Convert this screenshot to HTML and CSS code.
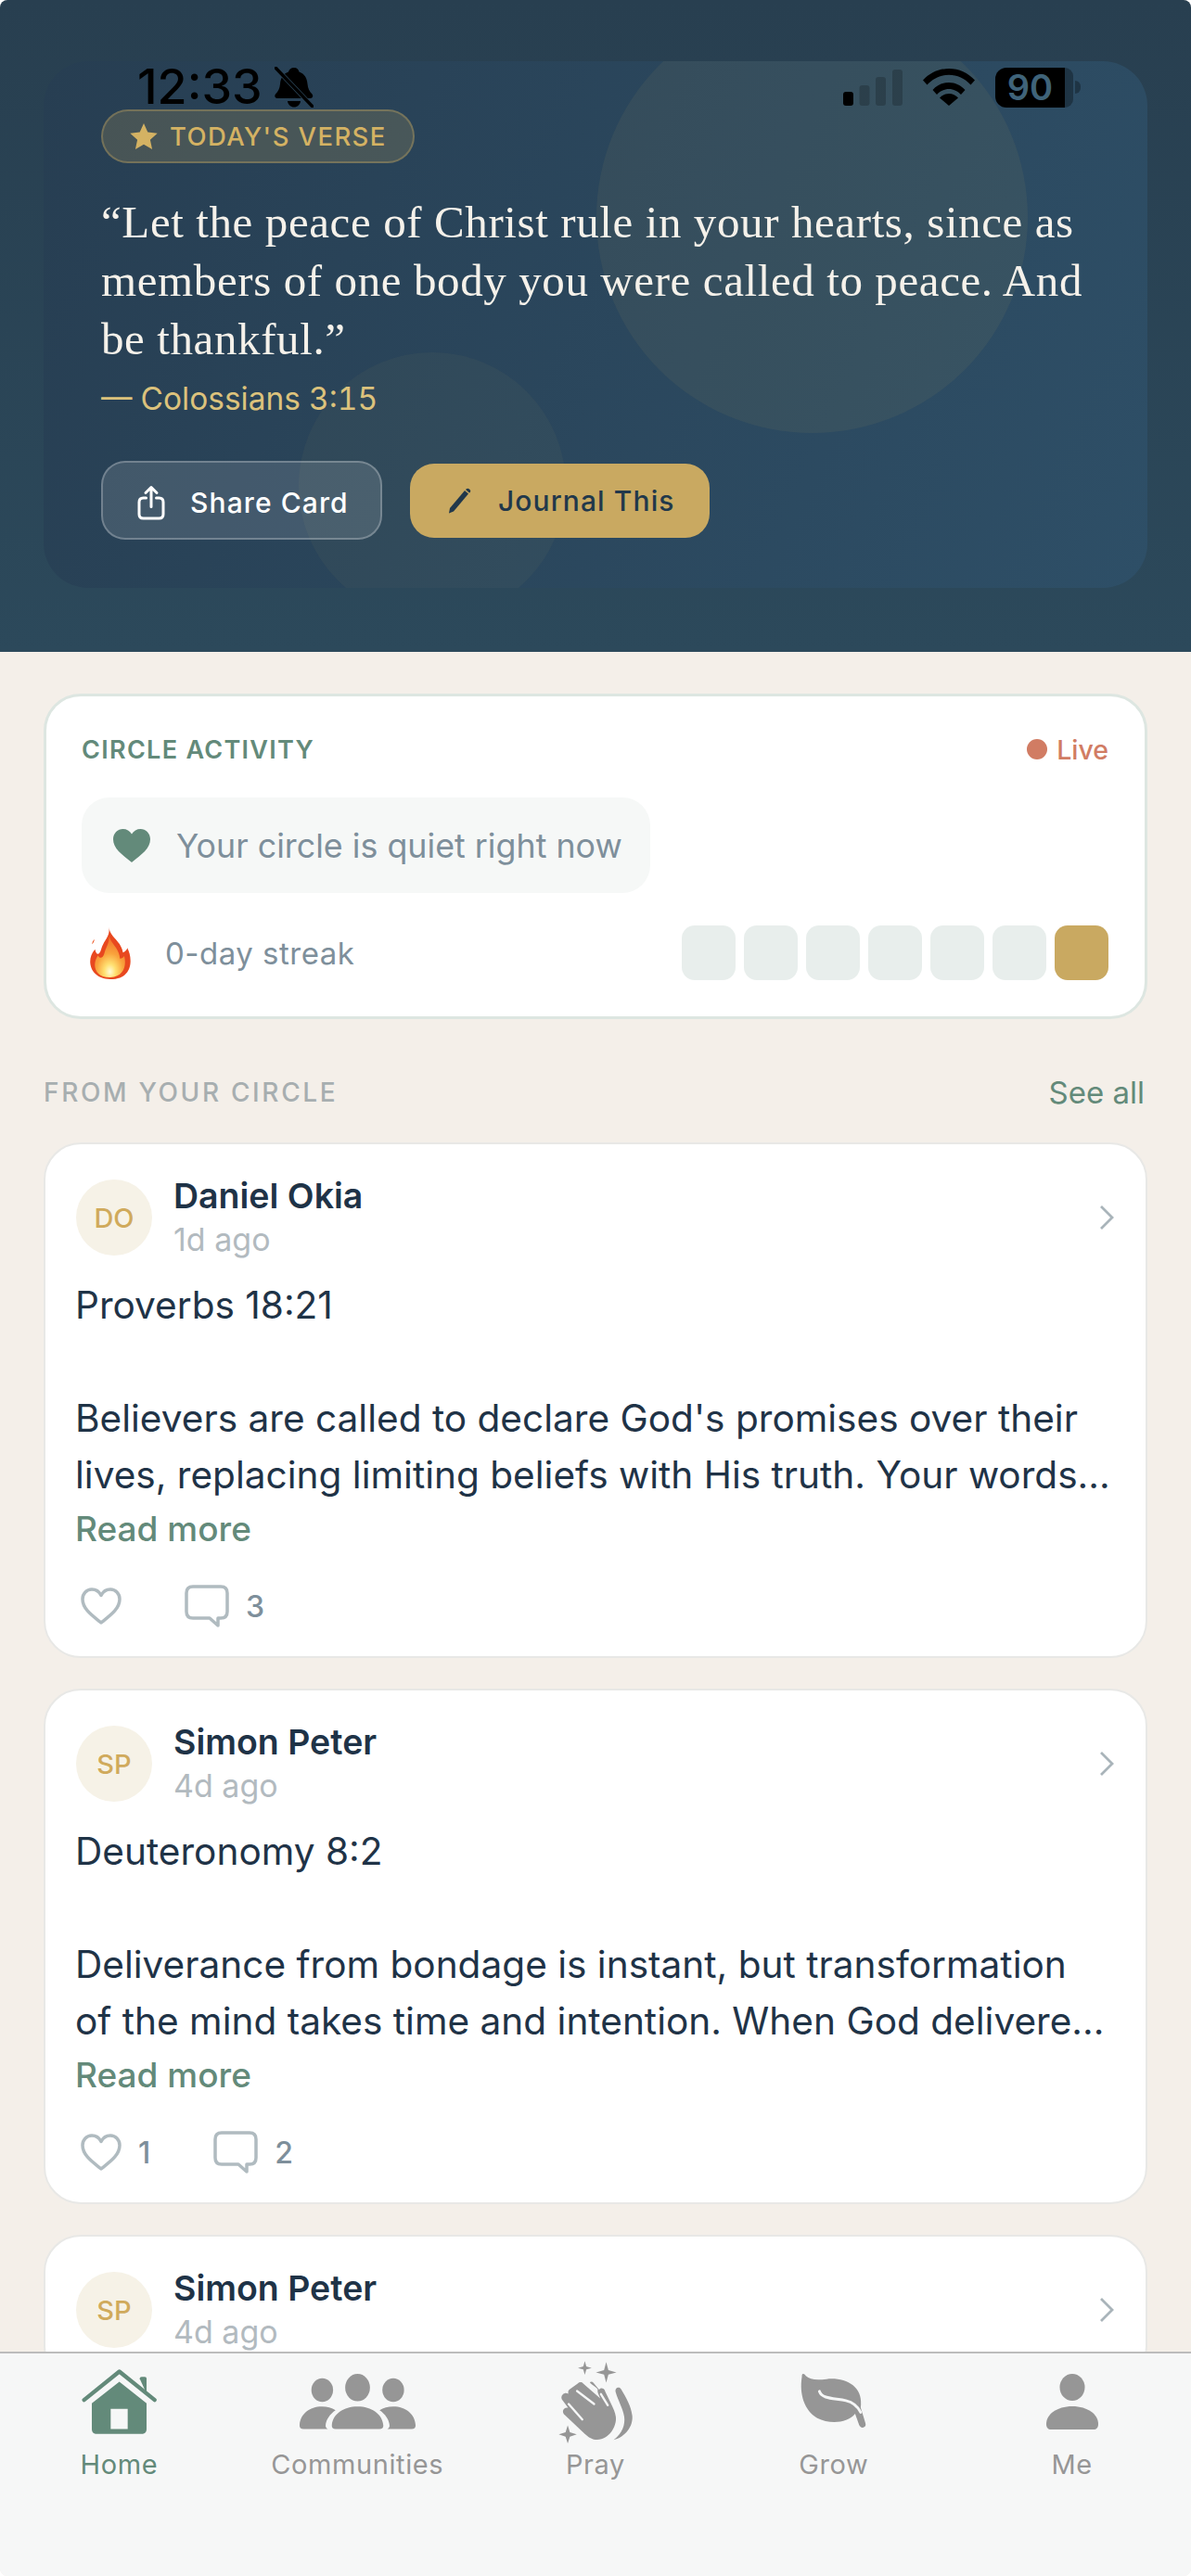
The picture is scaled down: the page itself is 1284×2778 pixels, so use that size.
FILE: index.html
```html
<!DOCTYPE html>
<html lang="en">
<head>
  <meta charset="UTF-8" />
  <meta name="viewport" content="width=device-width, initial-scale=1" />
  <title>Home</title>
  <link rel="stylesheet" href="styles.css">
</head>
<body>
<div class="screen">

  <!-- Status bar sits over the hero -->
  <div class="status-bar">
    <div class="status-left">
      <span class="status-time">12:33</span>
      <svg class="bell" viewBox="0 0 42 44" width="42" height="44">
        <path d="M21 1c3 0 5 2 5.500 4.500 6 2 8.500 7 9 13 .5 5 2 8 5 11 1.500 2 .5 4.500-2 4.500H3c-2.500 0-3.500-2.500-2-4.500 3-3 4.500-6 5-11 .5-6 3-11 9-13C15.500 3 18 1 21 1z"/>
        <path d="M14 37h14c-.5 4-3.500 6.500-7 6.500s-6.500-2.500-7-6.500z"/>
        <path class="bell-cut" d="M3 3l36 38"/>
        <path class="bell-slash" d="M1 1l40 42"/>
      </svg>
    </div>
    <div class="status-right">
      <svg viewBox="0 0 64 40" width="64" height="40">
        <rect x="0" y="25" width="11" height="15" rx="3"/>
        <rect class="bar-off" x="17.500" y="18" width="11" height="22" rx="3"/>
        <rect class="bar-off" x="35" y="9" width="11" height="31" rx="3"/>
        <rect class="bar-off" x="53" y="1" width="11" height="39" rx="3"/>
      </svg>
      <svg class="wifi" viewBox="0 0 56 40" width="56" height="40">
        <path d="M0 12.500C7.500 4.500 17 0 28 0s20.500 4.500 28 12.500l-4.500 5C45 10.500 37 6.800 28 6.800S11 10.500 4.500 17.500z"/>
        <path d="M10.500 23C15 18 21 15 28 15s13 3 17.500 8L41 28c-3.300-3.500-8-6-13-6s-9.700 2.500-13 6z"/>
        <path d="M18 31.500c2.500-2.700 6-4.500 10-4.500s7.500 1.800 10 4.500L28 40z"/>
      </svg>
      <div class="battery">
        <span class="battery-level">90</span>
        <span class="battery-rest"></span>
        <span class="battery-nub"></span>
      </div>
    </div>
  </div>

  <section class="hero">
    <div class="verse-card">
      <div class="blob blob-big"></div>
      <div class="blob blob-small"></div>
      <div class="verse-badge">
        <svg viewBox="0 0 30 29" width="30" height="29"><path d="M15 0l4.300 9.600 10.400 1.100-7.800 7 2.200 10.300L15 22.700 5.900 28l2.200-10.300-7.800-7 10.400-1.100z"/></svg>
        <span>TODAY'S VERSE</span>
      </div>
      <p class="verse-text">“Let the peace of Christ rule in your hearts, since as members of one body you were called to peace. And be thankful.”</p>
      <p class="verse-ref">— Colossians 3:15</p>
      <div class="verse-actions">
        <button class="btn btn-share">
          <svg viewBox="0 0 30 38" width="30" height="38" fill="none" stroke="#fff" stroke-width="3" stroke-linecap="round" stroke-linejoin="round">
            <path d="M15 2.500v21M9 8.500l6-6 6 6"/>
            <path d="M9.500 14H6.500C3.500 14 2 15.500 2 18.500v13C2 34.500 3.500 36 6.500 36h17c3 0 4.500-1.500 4.500-4.500v-13c0-3-1.500-4.500-4.500-4.500h-3"/>
          </svg>
          <span>Share Card</span>
        </button>
        <button class="btn btn-journal">
          <svg viewBox="0 0 30 30" width="30" height="30"><path d="M3 28.500l1-5.500L20 4l4 3.500L8 26.500z" fill="#21384b"/><path d="M21.500 2.500c1-1 2.200-1.200 3.200-.3l.8.7c1 .9 1 2.100.2 3.200L25 6.500 21 3z" fill="#21384b"/></svg>
          <span>Journal This</span>
        </button>
      </div>
    </div>
  </section>

  <main class="feed">
    <section class="activity">
      <div class="activity-head">
        <span class="activity-title">CIRCLE ACTIVITY</span>
        <span class="live"><i class="live-dot"></i>Live</span>
      </div>
      <div class="quiet">
        <svg viewBox="0 0 40 36" width="40" height="36"><path d="M20 36C9 27 0 21 0 11 0 4.500 5 0 10.500 0 14.500 0 18 2 20 5.500 22 2 25.500 0 29.500 0 35 0 40 4.500 40 11c0 10-9 16-20 25z"/></svg>
        <span>Your circle is quiet right now</span>
      </div>
      <div class="streak">
        <svg class="flame" viewBox="105 90 150 175" width="50" height="58">
          <defs>
            <radialGradient id="flameGlow" cx="50%" cy="86%" r="75%">
              <stop offset="0" stop-color="#fffbd8"/>
              <stop offset=".25" stop-color="#ffe071"/>
              <stop offset=".6" stop-color="#f9a23c"/>
              <stop offset="1" stop-color="#f27a2e"/>
            </radialGradient>
          </defs>
          <path fill="#e8481f" d="M175 92c3 33 38 42 46 83 8-3 13-9 14-15 17 30 22 102-55 102-65 0-82-62-50-97 4 20 14 20 20 0 10-35 30-40 25-73z"/>
          <path fill="url(#flameGlow)" d="M176 122c6 25 32 38 35 72 6 2 11-2 14-8 8 30 0 68-45 70-50 2-62-42-40-72 4 12 16 10 20-5 5-22 16-30 16-57z"/>
          <path fill="#ee5a2a" d="M128 132c0 6-4 12-7 16-1-5 2-12 7-16z"/>
        </svg>
        <span class="streak-label">0-day streak</span>
        <div class="streak-days">
          <i class="day"></i><i class="day"></i><i class="day"></i><i class="day"></i><i class="day"></i><i class="day"></i><i class="day day-today"></i>
        </div>
      </div>
    </section>

    <div class="section-head">
      <span class="section-title">FROM YOUR CIRCLE</span>
      <span class="see-all">See all</span>
    </div>

    <article class="post">
      <div class="post-head">
        <div class="avatar">DO</div>
        <div class="post-who">
          <div class="post-name">Daniel Okia</div>
          <div class="post-time">1d ago</div>
        </div>
        <svg class="chevron" viewBox="0 0 16 28" width="16" height="28"><path d="M2 2l12 12L2 26"/></svg>
      </div>
      <p class="post-body">Proverbs 18:21

Believers are called to declare God's promises over their lives, replacing limiting beliefs with His truth. Your words...</p>
      <div class="read-more">Read more</div>
      <div class="post-actions">
        <span class="action">
          <svg class="icon-heart" viewBox="0 0 44 40" width="44" height="40"><path d="M22 38C12 30 2 23 2 12.500 2 6.500 6.500 2 12 2c4.200 0 8 2.500 10 6.500C24 4.500 27.800 2 32 2c5.500 0 10 4.500 10 10.500C42 23 32 30 22 38z"/></svg>
        </span>
        <span class="action">
          <svg class="icon-comment" viewBox="0 0 48 46" width="48" height="46"><path d="M9 2h30c4.500 0 7 2.500 7 7v20c0 4.500-2.500 7-7 7h-3v8l-9-8H9c-4.500 0-7-2.500-7-7V9c0-4.500 2.500-7 7-7z"/></svg>
          <span>3</span>
        </span>
      </div>
    </article>

    <article class="post">
      <div class="post-head">
        <div class="avatar">SP</div>
        <div class="post-who">
          <div class="post-name">Simon Peter</div>
          <div class="post-time">4d ago</div>
        </div>
        <svg class="chevron" viewBox="0 0 16 28" width="16" height="28"><path d="M2 2l12 12L2 26"/></svg>
      </div>
      <p class="post-body">Deuteronomy 8:2

Deliverance from bondage is instant, but transformation
of the mind takes time and intention. When God delivere...</p>
      <div class="read-more">Read more</div>
      <div class="post-actions">
        <span class="action">
          <svg class="icon-heart" viewBox="0 0 44 40" width="44" height="40"><path d="M22 38C12 30 2 23 2 12.500 2 6.500 6.500 2 12 2c4.200 0 8 2.500 10 6.500C24 4.500 27.800 2 32 2c5.500 0 10 4.500 10 10.500C42 23 32 30 22 38z"/></svg>
          <span>1</span>
        </span>
        <span class="action">
          <svg class="icon-comment" viewBox="0 0 48 46" width="48" height="46"><path d="M9 2h30c4.500 0 7 2.500 7 7v20c0 4.500-2.500 7-7 7h-3v8l-9-8H9c-4.500 0-7-2.500-7-7V9c0-4.500 2.500-7 7-7z"/></svg>
          <span>2</span>
        </span>
      </div>
    </article>

    <article class="post">
      <div class="post-head">
        <div class="avatar">SP</div>
        <div class="post-who">
          <div class="post-name">Simon Peter</div>
          <div class="post-time">4d ago</div>
        </div>
        <svg class="chevron" viewBox="0 0 16 28" width="16" height="28"><path d="M2 2l12 12L2 26"/></svg>
      </div>
    </article>
  </main>

  <!-- Tab bar -->
  <nav class="tabs">
    <div class="tab tab-active">
      <div class="tab-icon">
        <svg viewBox="80 105 243 215" width="81" height="72">
          <path d="M268 138c0-4 2-6 6-6h10c4 0 6 2 6 6v48z"/>
          <path d="M88 207L202 115l114 92" fill="none" stroke="#638a7a" stroke-width="13" stroke-linecap="round" stroke-linejoin="round"/>
          <path fill-rule="evenodd" d="M202 148l88 70v83c0 10-6 16-16 16H129c-10 0-16-6-16-16v-83zM174 236v65h55v-65z"/>
        </svg>
      </div>
      <span>Home</span>
    </div>
    <div class="tab">
      <div class="tab-icon">
        <svg viewBox="780 120 380 185" width="127" height="62">
          <ellipse cx="856" cy="175" rx="35" ry="38"/>
          <ellipse cx="970" cy="167" rx="40" ry="44"/>
          <ellipse cx="1085" cy="175" rx="35" ry="38"/>
          <path d="M887 288c3-36 38-60 83-60s80 24 83 60c1 9-4 13-12 13H899c-8 0-13-4-12-13z"/>
          <path d="M783 288c2-36 32-60 72-60 17 0 32 4 44 12-18 12-31 31-32 48-1 5 2 10 7 13h-78c-9 0-14-5-13-13z"/>
          <path d="M1157 288c-2-36-32-60-72-60-17 0-32 4-44 12 18 12 31 31 32 48 1 5-2 10-7 13h78c9 0 14-5 13-13z"/>
        </svg>
      </div>
      <span>Communities</span>
    </div>
    <div class="tab">
      <div class="tab-icon">
        <svg viewBox="180 70 245 272" width="82" height="91">
          <path d="M268 74l5 17 17 5-17 5-5 17-5-17-17-5 17-5z"/>
          <path d="M337 77l7 26 26 7-26 7-7 26-7-26-26-7 26-7z"/>
          <path d="M213 281l7 22 22 7-22 7-7 22-7-22-22-7 22-7z"/>
          <path d="M245 146c6-6 13-5 18 0l55 48c-8-16-10-24-8-28-3-8-22-16-26-24 4-3 9-2 12 2l18 22c3-5 9-6 14-3 3 2 5 5 6 9l18 38c8 16 14 30 16 43 4 30-22 74-60 74-16 0-28-8-40-19l-64-60c-8-7-8-15-2-21 3-3 8-4 12-3l-16-22c-7-7-7-15-1-21 5-5 12-6 18-2-1-5-1-9 3-13z"/>
          <path class="pray-gap" d="M243 170l55 42M216 212l44 50M320 180l22 36"/>
          <path d="M372 160c5-3 10-1 13 4 16 28 32 52 36 86 3 34-22 68-60 78 28-22 38-50 34-76-4-26-20-52-28-80-1-5 1-9 5-12z"/>
        </svg>
      </div>
      <span>Pray</span>
    </div>
    <div class="tab">
      <div class="tab-icon">
        <svg viewBox="960 120 225 190" width="75" height="63">
          <path d="M972 124c4-2 7 1 11 6 13 12 34 14 67 10 62-6 116 22 112 84-1 6-1 10 1 14l13 43c3 8 1 14-6 16-6 2-11-1-14-8l-13-36c-26 32-84 34-123 14-42-24-59-78-50-134 0-4 0-7 2-9z"/>
          <path class="leaf-vein" d="M1027 180c8 26 52 22 86 30 22 5 38 18 48 38"/>
        </svg>
      </div>
      <span>Grow</span>
    </div>
    <div class="tab">
      <div class="tab-icon">
        <svg viewBox="0 0 56 60" width="56" height="60">
          <ellipse cx="28" cy="14.500" rx="13.500" ry="14.500"/>
          <path d="M0 54C0 44 11 35 28 35s28 9 28 19c0 4-2 6-5 6H5c-3 0-5-2-5-6z"/>
        </svg>
      </div>
      <span>Me</span>
    </div>
  </nav>
</div>
</body>
</html>
```

FILE: styles.css
```css
html, body {
  margin: 0;
  background: #fff;
}

body {
  font-family: Inter, "Noto Sans", sans-serif;
  color: #1f3347;
}

.screen {
  position: relative;
  width: 1284px;
  height: 2778px;
  overflow: hidden;
  background: #f4efe9;
  border-radius: 8px;
}

/* status bar */
.status-bar {
  position: absolute;
  top: 72px;
  left: 148px;
  width: 1017px;
  height: 44px;
  display: flex;
  justify-content: space-between;
  align-items: center;
  color: #000;
  z-index: 3;
}

.status-left {
  display: flex;
  align-items: center;
  gap: 13px;
}

.status-time {
  font-size: 52px;
  font-weight: 500;
  line-height: 44px;
}

.bell-cut {
  fill: none;
  stroke: #2a4456;
  stroke-width: 5;
}

.bell-slash {
  fill: none;
  stroke: #000;
  stroke-width: 3.500;
  stroke-linecap: round;
}

.status-right {
  display: flex;
  align-items: center;
  margin-left: auto;
}

.bar-off {
  fill: rgba(0, 0, 0, 0.2);
}

.wifi {
  margin-left: 22px;
}

.battery {
  display: flex;
  align-items: center;
  height: 43px;
  margin-left: 22px;
}

.battery-level {
  width: 75px;
  height: 43px;
  background: #000;
  border-radius: 12px 0 0 12px;
  color: #3f6379;
  font-size: 38px;
  font-weight: 600;
  line-height: 43px;
  text-align: center;
}

.battery-rest {
  width: 9px;
  height: 43px;
  background: rgba(0, 0, 0, 0.3);
  border-radius: 0 12px 12px 0;
}

.battery-nub {
  width: 6px;
  height: 14px;
  margin-left: 2px;
  background: rgba(0, 0, 0, 0.3);
  border-radius: 0 7px 7px 0;
}

/* hero */
.hero {
  padding: 66px 47px 69px;
  background: linear-gradient(180deg, #283f50, #2c495b);
}

.verse-card {
  position: relative;
  overflow: hidden;
  padding: 52px 62px;
  border-radius: 48px;
  background: linear-gradient(115deg, #273e52, #2e4f67);
}

.blob {
  position: absolute;
  border-radius: 50%;
}

.blob-big {
  top: -64px;
  right: 129px;
  width: 465px;
  height: 465px;
  background: rgba(201, 169, 97, 0.075);
}

.blob-small {
  top: 314px;
  left: 275px;
  width: 288px;
  height: 288px;
  background: rgba(201, 169, 97, 0.05);
}

.verse-badge {
  position: relative;
  display: inline-flex;
  align-items: center;
  gap: 13px;
  height: 58px;
  padding: 0 28px 0 29px;
  box-sizing: border-box;
  border: 2px solid rgba(201, 169, 97, 0.35);
  border-radius: 29px;
  background: rgba(201, 169, 97, 0.2);
  color: #d4b263;
  fill: #d4b263;
  font-size: 27.500px;
  font-weight: 500;
  letter-spacing: 1.400px;
}

.verse-text {
  position: relative;
  margin: 32px 0 0;
  font-family: "Liberation Serif", serif;
  font-size: 49px;
  line-height: 63px;
  letter-spacing: 0.600px;
  color: #f5f1ea;
}

.verse-ref {
  position: relative;
  margin: 13px 0 0;
  font-size: 33.500px;
  font-feature-settings: "tnum";
  line-height: 40px;
  color: #dcc27c;
}

.verse-actions {
  position: relative;
  display: flex;
  align-items: center;
  gap: 30px;
  margin-top: 47px;
}

.btn {
  display: flex;
  align-items: center;
  box-sizing: border-box;
  border-radius: 26px;
  font-family: inherit;
  font-size: 30px;
  font-weight: 500;
  letter-spacing: 1.100px;
}

.btn-share {
  width: 303px;
  height: 85px;
  padding: 4px 0 0 37px;
  gap: 27px;
  border: 2px solid rgba(255, 255, 255, 0.25);
  background: rgba(255, 255, 255, 0.12);
  color: #fff;
}

.btn-journal {
  width: 323px;
  height: 80px;
  padding: 0 0 0 39px;
  gap: 26px;
  border: 0;
  background: #c9a961;
  color: #21384b;
}

/* activity card */
.feed {
  padding: 45px 47px 0;
}

.activity {
  padding: 40px 39px 39px 38px;
  border: 3px solid #dde6e1;
  border-radius: 40px;
  background: #fff;
}

.activity-head {
  display: flex;
  justify-content: space-between;
  align-items: center;
  height: 34px;
}

.activity-title {
  color: #638a7a;
  font-size: 27px;
  font-weight: 600;
  letter-spacing: 1.300px;
}

.live {
  display: flex;
  align-items: center;
  gap: 10px;
  color: #d17c63;
  font-size: 28.500px;
  font-weight: 500;
}

.live-dot {
  width: 22px;
  height: 22px;
  border-radius: 50%;
  background: #d17c63;
}

.quiet {
  display: inline-flex;
  align-items: center;
  gap: 28px;
  width: 613px;
  height: 103px;
  box-sizing: border-box;
  margin-top: 35px;
  padding-left: 34px;
  border-radius: 30px;
  background: #f6f8f7;
  color: #7e8f9b;
  fill: #638a7a;
  font-size: 35.800px;
  vertical-align: top;
}

.streak {
  display: flex;
  align-items: center;
  height: 59px;
  margin-top: 35px;
}

.flame {
  margin-left: 6px;
}

.streak-label {
  margin-left: 34px;
  color: #7e8f9b;
  font-size: 33px;
  letter-spacing: 0.500px;
}

.streak-days {
  display: flex;
  gap: 9px;
  margin-left: auto;
}

.day {
  width: 58px;
  height: 59px;
  border-radius: 14px;
  background: #e8eeec;
}

.day-today {
  background: #c9a961;
}

/* feed */
.section-head {
  display: flex;
  justify-content: space-between;
  align-items: center;
  height: 40px;
  margin: 59px 0 34px;
}

.section-title {
  color: #a7aeb0;
  font-size: 28px;
  font-weight: 500;
  letter-spacing: 2.650px;
}

.see-all {
  color: #638a7a;
  font-size: 33px;
  font-weight: 400;
  margin-right: 3px;
}

.post {
  margin-bottom: 33px;
  padding: 33px 34px 31px 32px;
  border: 2px solid #e8e8e6;
  border-radius: 40px;
  background: #fff;
}

.post-head {
  display: flex;
  align-items: center;
  height: 92px;
  margin-left: 1px;
}

.avatar {
  display: flex;
  align-items: center;
  justify-content: center;
  flex: none;
  width: 82px;
  height: 82px;
  border-radius: 50%;
  background: #f6f2e7;
  color: #d0aa5c;
  font-size: 29px;
  font-weight: 500;
}

.post-who {
  margin-left: 23px;
}

.post-name {
  font-size: 37.500px;
  font-weight: 600;
  line-height: 46px;
  color: #1f3347;
}

.post-time {
  margin-top: 1px;
  font-size: 34px;
  line-height: 46px;
  color: #b2babf;
}

.chevron {
  margin-left: auto;
  fill: none;
  stroke: #a9b4ba;
  stroke-width: 2.800;
}

.post-body {
  margin: 18px 0 0;
  font-size: 40.600px;
  line-height: 61px;
  white-space: pre-line;
  color: #1f3347;
}

.read-more {
  margin-top: 6px;
  font-size: 37px;
  font-weight: 500;
  line-height: 44px;
  color: #638a7a;
}

.post-actions {
  display: flex;
  align-items: center;
  gap: 68px;
  height: 46px;
  margin-top: 38px;
  padding-left: 6px;
}

.action {
  display: flex;
  align-items: center;
  gap: 18px;
  color: #7e8f9b;
  font-size: 32px;
  font-weight: 500;
}

.icon-heart,
.icon-comment {
  fill: none;
  stroke: #b0bbc0;
  stroke-width: 3.500;
  stroke-linejoin: round;
}

/* tab bar */
.tabs {
  position: absolute;
  left: 0;
  right: 0;
  bottom: 0;
  top: 2536px;
  display: grid;
  grid-template-columns: repeat(5, 1fr);
  box-sizing: border-box;
  padding-top: 8px;
  border-top: 2px solid #bcbcbc;
  background: #f6f7f7;
  z-index: 2;
}

.tab {
  display: flex;
  flex-direction: column;
  align-items: center;
  color: #969696;
  fill: #969696;
  font-size: 29px;
  line-height: 36px;
  letter-spacing: 0.600px;
}

.tab-active {
  color: #638a7a;
  fill: #638a7a;
}

.tab-icon {
  display: flex;
  align-items: center;
  justify-content: center;
  height: 88px;
  margin-bottom: 6px;
}

.pray-gap,
.leaf-vein {
  fill: none;
  stroke: #f6f7f7;
  stroke-linecap: round;
}

.pray-gap {
  stroke-width: 7;
}

.leaf-vein {
  stroke-width: 9;
}
```
